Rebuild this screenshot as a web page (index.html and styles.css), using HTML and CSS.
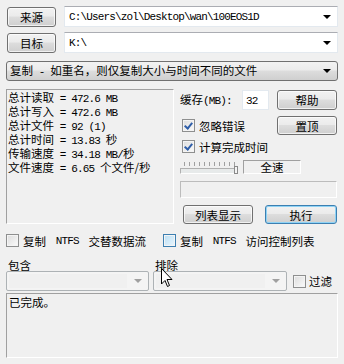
FILE: index.html
```html
<!DOCTYPE html>
<html lang="zh-CN">

<head>
  <meta charset="UTF-8">
  <title>FastCopy</title>
  <link rel="stylesheet" href="styles.css">
</head>

<body>

  <div class="window">
    <div class="path-row">
      <button class="btn src-btn">来源</button>
      <div class="edit">
        <span class="latin">C:\Users\zol\Desktop\wan\100EOS1D</span>
        <span class="arrow"></span>
      </div>
    </div>

    <div class="path-row">
      <button class="btn src-btn">目标</button>
      <div class="edit">
        <span class="latin">K:\</span>
        <span class="arrow"></span>
      </div>
    </div>

    <div class="mode">
      <span>复制<span class="latin"> - </span>如重名，则仅复制大小与时间不同的文件</span>
      <span class="arrow"></span>
    </div>

    <div class="middle">
      <div class="stats">
        <div>总计读取<span class="latin"> = 472.6 MB</span></div>
        <div>总计写入<span class="latin"> = 472.6 MB</span></div>
        <div>总计文件<span class="latin"> = 92 (1)</span></div>
        <div>总计时间<span class="latin"> = 13.83 </span>秒</div>
        <div>传输速度<span class="latin"> = 34.18 MB/</span>秒</div>
        <div>文件速度<span class="latin"> = 6.65 </span>个文件/秒</div>
      </div>

      <div class="side">
        <div class="cache-row">
          <span class="cache-label">缓存<span class="latin">(MB):</span></span>
          <span class="num-box latin">32</span>
          <button class="btn side-btn">帮助</button>
        </div>

        <div class="opt-row">
          <label class="check"><span class="box checked"></span>忽略错误</label>
          <button class="btn side-btn small">置顶</button>
        </div>

        <div class="calc-row">
          <label class="check"><span class="box checked"></span>计算完成时间</label>
        </div>

        <div class="speed-row">
          <div class="slider">
            <div class="ticks"></div>
            <div class="track"><span class="thumb"></span></div>
          </div>
          <div class="speed-box">全速</div>
        </div>

        <div class="progress"></div>

        <div class="action-row">
          <button class="btn list-btn">列表显示</button>
          <button class="btn run-btn">执行</button>
        </div>
      </div>
    </div>

    <div class="ntfs-row">
      <label class="check ntfs-first"><span class="box"></span>复制<span class="latin"> NTFS </span>交替数据流</label>
      <label class="check"><span class="box hover"></span>复制<span class="latin"> NTFS </span>访问控制列表</label>
    </div>

    <div class="filter-labels">
      <span class="inc-label">包含</span>
      <span>排除</span>
    </div>

    <div class="filter-row">
      <div class="drop inc"><span class="drop-inner"></span><span class="drop-arrow"></span></div>
      <div class="drop exc"><span class="drop-inner"></span><span class="drop-arrow"></span></div>
      <label class="check"><span class="box"></span>过滤</label>
    </div>

    <div class="log">已完成。</div>

    <svg class="cursor" width="12" height="20" viewBox="0 0 12 20">
      <path d="M0.5 0.5 L0.5 16 L4 12.5 L6.5 18.5 L8.5 17.5 L6 11.5 L11 11.5 Z" fill="#fff" stroke="#000" stroke-width="1" />
    </svg>
  </div>

</body>

</html>
```

FILE: styles.css
```css
* {
  box-sizing: border-box;
  margin: 0;
  padding: 0;
}

body {
  background: #f0f0f0;
  font-family: "Noto Sans CJK SC", sans-serif;
  font-size: 11.5px;
  line-height: 12px;
  color: #000;
  width: 344px;
  height: 364px;
  overflow: hidden;
}

.window {
  position: relative;
  padding: 6px 6px 0 6px;
}

.latin {
  font-family: "Liberation Mono", monospace;
  font-size: 11px;
  letter-spacing: -0.85px;
  white-space: pre;
}

.btn {
  font: inherit;
  color: #000;
  height: 20px;
  border: 1px solid #707070;
  border-radius: 3px;
  background: linear-gradient(#f2f2f2 0%, #ebebeb 45%, #dddddd 50%, #cfcfcf 100%);
  box-shadow: inset 0 0 0 1px rgba(255, 255, 255, 0.7);
}

/* path rows */

.path-row {
  display: flex;
  align-items: center;
  gap: 8px;
  height: 21px;
  padding-left: 1px;
}

.path-row + .path-row {
  margin-top: 5px;
}

.src-btn {
  width: 49px;
}

.edit {
  flex: 1;
  height: 21px;
  display: flex;
  align-items: center;
  padding-left: 4px;
  background: #fff;
  border: 1px solid #e3e9ef;
  border-top-color: #abadb3;
}

.arrow {
  margin-left: auto;
  margin-right: 6px;
  border-left: 4px solid transparent;
  border-right: 4px solid transparent;
  border-top: 4px solid #000;
}

.mode {
  display: flex;
  align-items: center;
  height: 20px;
  margin-top: 8px;
  padding-left: 3px;
  border: 1px solid #707070;
  border-radius: 3px;
  background: linear-gradient(#f2f2f2 0%, #ebebeb 45%, #dddddd 50%, #cfcfcf 100%);
}

/* middle block */

.middle {
  display: flex;
  gap: 6px;
  margin-top: 8px;
  height: 135px;
}

.stats {
  flex: none;
  width: 168px;
  padding: 1px 0 0 1px;
  border: 1px solid;
  border-color: #a0a0a0 #fff #fff #a0a0a0;
}

.side {
  flex: none;
  width: 158px;
  display: flex;
  flex-direction: column;
  padding-right: 1px;
}

.cache-row {
  display: flex;
  align-items: center;
  height: 20px;
  margin-top: 1px;
}

.cache-label {
  width: 62px;
}

.num-box {
  width: 27px;
  height: 20px;
  padding: 4px 0 0 3px;
  background: #fff;
  border: 1px solid #e3e9ef;
}

.side-btn {
  width: 60px;
  margin-left: auto;
}

.side-btn.small {
  height: 19px;
}

.opt-row {
  display: flex;
  align-items: center;
  height: 19px;
  margin-top: 6px;
}

.calc-row {
  display: flex;
  align-items: center;
  height: 13px;
  margin-top: 5px;
}

.check {
  display: flex;
  align-items: center;
  gap: 4px;
  margin-left: 2px;
}

.box {
  position: relative;
  flex: none;
  width: 13px;
  height: 13px;
  border: 1px solid #8e8f8f;
  background: linear-gradient(135deg, #dcdcdc, #fbfbfb);
  box-shadow: inset 0 0 0 1px #f4f4f4;
}

.box.hover {
  border-color: #3c7fb1;
  background: linear-gradient(135deg, #b9def4, #eaf6fd);
}

.box.checked::after {
  content: "";
  position: absolute;
  left: 3px;
  top: 1px;
  width: 3px;
  height: 6px;
  border: solid #2f5ea8;
  border-width: 0 2px 2px 0;
  transform: rotate(40deg);
}

.speed-row {
  display: flex;
  align-items: flex-end;
  gap: 5px;
  height: 17px;
  margin-top: 5px;
}

.slider {
  flex: none;
  width: 58px;
}

.ticks {
  height: 4px;
  margin: 0 3px 2px 4px;
  background: repeating-linear-gradient(90deg, #a0a0a0 0 1px, transparent 1px 5px);
}

.track {
  position: relative;
  height: 6px;
  border: 1px solid #b0b0b0;
  border-right-color: #fff;
  border-bottom-color: #fff;
  background: #e7eaea;
}

.thumb {
  position: absolute;
  right: -1px;
  top: -3px;
  width: 4px;
  height: 8px;
  background: #f4f4f4;
  border: 1px solid #8a8a8a;
}

.speed-box {
  flex: none;
  width: 58px;
  height: 14px;
  text-align: center;
  line-height: 12px;
  border: 1px solid;
  border-color: #a0a0a0 #fff #fff #a0a0a0;
}

.progress {
  height: 18px;
  margin-top: 7px;
  border: 1px solid;
  border-color: #bcbcbc #fff #fff #bcbcbc;
}

.action-row {
  display: flex;
  justify-content: space-between;
  margin-top: 7px;
  padding-left: 3px;
}

.list-btn {
  width: 70px;
  height: 19px;
}

.run-btn {
  width: 72px;
  height: 19px;
  border-color: #3c7fb1;
  box-shadow: inset 0 0 0 1px #8fd3f5;
}

/* bottom block */

.ntfs-row {
  display: flex;
  align-items: center;
  height: 13px;
  margin-top: 10px;
}

.ntfs-row .check {
  margin-left: 0;
}

.ntfs-first {
  width: 157px;
}

.filter-labels {
  display: flex;
  height: 12px;
  margin-top: 12px;
  padding-left: 2px;
}

.inc-label {
  width: 147px;
}

.filter-row {
  display: flex;
  align-items: center;
  gap: 4px;
  height: 20px;
}

.drop {
  display: flex;
  align-items: center;
  height: 20px;
  padding: 2px;
  border: 1px solid #adb2b5;
  border-radius: 2px;
  background: #f4f4f4;
}

.drop.inc {
  width: 143px;
}

.drop.exc {
  width: 134px;
}

.drop-inner {
  flex: 1;
  height: 14px;
  background: #f0f0f0;
}

.drop-arrow {
  margin: 0 4px 0 7px;
  border-left: 4px solid transparent;
  border-right: 4px solid transparent;
  border-top: 4px solid #a0a0a0;
}

.filter-row .check {
  margin-left: 2px;
  gap: 3px;
}

.log {
  height: 65px;
  margin-top: 2px;
  padding: 2px 0 0 2px;
  border: 1px solid;
  border-color: #a0a0a0 #fff #fff #a0a0a0;
}

.cursor {
  position: absolute;
  left: 161px;
  top: 268px;
}
```
